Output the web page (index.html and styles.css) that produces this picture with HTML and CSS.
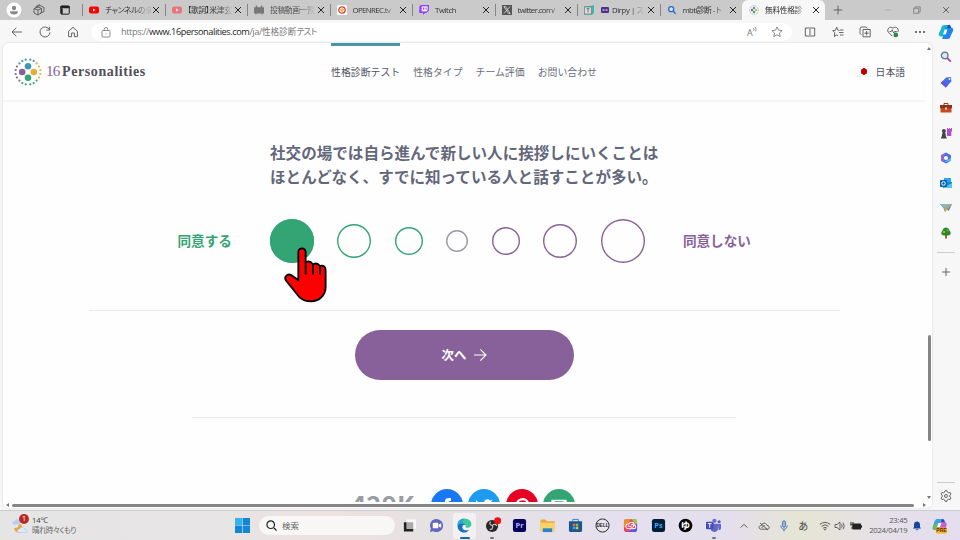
FILE: index.html
```
<!DOCTYPE html>
<html lang="ja">
    <head>
        <meta charset="utf-8">
        <title>無料性格診断テスト | 16Personalities</title>
        <link rel="stylesheet" href="styles.css">
    </head>
    <body>
        <!-- tabs -->
        <div class="tabs">
            <div class="tab-tools">
                <svg width="16" height="16" viewBox="0 0 16 16"><circle cx="8" cy="8" r="7.5" fill="#fff"/><circle cx="8" cy="6" r="2.2" fill="#888"/><path d="M4 9.2h8c0 2.2-1.6 3.3-4 3.3s-4-1.100-4-3.300z" fill="#888"/></svg>
                <svg width="12" height="12" viewBox="0 0 12 12" class="line"><path d="M3 3.500 7 1.500l4 2v4l-4 2M3 3.500v-1l4-2M1 4.500l4-1.500 3.500 1.500v4L5 11 1 9zM1 4.500 5 6l3.500-1.500M5 6v5"/></svg>
                <svg width="10" height="10" viewBox="0 0 10 10"><rect x=".7" y=".9" width="8.600" height="8.300" rx="1.300" fill="none" stroke="#222" stroke-width="1"/><path d="M.5 1h9v2.300h-9zM1 3v6h1.700V3z" fill="#222"/></svg>
            </div>
            <div class="tab">
                <svg class="fav" viewBox="0 0 10 10"><rect y="1.500" width="10" height="7" rx="2" fill="#f00"/><path d="M4 3.500v3L6.600 5z" fill="#fff"/></svg>
                <span class="tab-title">チャンネルのダ</span><span class="close"></span>
            </div>
            <div class="tab">
                <svg class="fav" viewBox="0 0 10 10"><rect y="1.500" width="10" height="7" rx="2" fill="#e8757c"/><path d="M4 3.500v3L6.600 5z" fill="#fff"/></svg>
                <span class="tab-title">【歌詞】米津玄</span><span class="close"></span>
            </div>
            <div class="tab">
                <svg class="fav" viewBox="0 0 10 10"><path d="M0 2.200h2L1.500.6l1-.4 1.200 2h2.600l1.200-2 1 .4L8 2.200h2v6.300H8.500v1h-1v-1h-5v1h-1v-1H0z" fill="#777"/></svg>
                <span class="tab-title dim">投稿動画一覧</span><span class="close"></span>
            </div>
            <div class="tab">
                <svg class="fav" viewBox="0 0 10 10"><rect width="10" height="10" rx="1.500" fill="#fff"/><circle cx="5" cy="5" r="3.200" fill="none" stroke="#d9432f" stroke-width="1.300"/><circle cx="5" cy="5" r="1.200" fill="none" stroke="#f08a24"/></svg>
                <span class="tab-title latin">OPENREC.tv</span><span class="close"></span>
            </div>
            <div class="tab">
                <svg class="fav" viewBox="0 0 10 10"><path d="M1.700 0H10v5.500L7.500 8H6L4 10V8H.3V1.800z" fill="#8b3ff5"/><path d="M2.600 1.200h6.200v3.900L7.500 6.400H2.600z" fill="#eee4ff"/><path d="M4.600 2.500v2M7 2.500v2" stroke="#8b3ff5"/></svg>
                <span class="tab-title">Twitch</span><span class="close"></span>
            </div>
            <div class="tab">
                <svg class="fav" viewBox="0 0 10 10"><rect width="10" height="10" fill="#555"/><path d="M1.800 1.500h1.600l4.800 7H6.600zM8 1.500l-6 7" fill="none" stroke="#ddd" stroke-width=".8"/></svg>
                <span class="tab-title latin">twitter.com/</span><span class="close"></span>
            </div>
            <div class="tab">
                <svg class="fav" viewBox="0 0 10 10"><path d="M0 1.500 8 .8 10 0v8l-2 1.800H0z" fill="#35b9b0"/><path d="M.4 2h7v7h-7z" fill="#ddd" stroke="#777" stroke-width=".7"/><path d="M2.500 3.700h3M4 3.700v3.800" stroke="#777"/></svg>
                <svg class="fav small" viewBox="0 0 8 8"><rect y="1" width="8" height="6" rx="1" fill="#50308a"/><path d="M1.500 4h2M4.500 4h2" stroke="#fff"/></svg>
                <span class="tab-title short">Dirpy | ス</span><span class="close"></span>
            </div>
            <div class="tab">
                <svg class="fav" viewBox="0 0 10 10"><circle cx="4.200" cy="4.200" r="2.500" fill="#d8e8ff" stroke="#2467d1" stroke-width="1.300"/><path d="m6 6 2.700 2.700" stroke="#2467d1" stroke-width="1.400"/></svg>
                <span class="tab-title latin">mbti診断 - ト</span><span class="close"></span>
            </div>
            <div class="tab active">
                <svg class="fav" viewBox="0 0 10 10"><circle cx="5" cy="5" r="4.300" fill="none" stroke="#8eb5a0" stroke-dasharray="1 .9"/><circle cx="5" cy="3" r="1.200" fill="#4298b4"/><circle cx="3" cy="5" r="1.200" fill="#88619a"/><circle cx="7" cy="5" r="1.200" fill="#e4ae3a"/><circle cx="5" cy="7" r="1.200" fill="#33a474"/></svg>
                <span class="tab-title">無料性格診</span><span class="close"></span>
            </div>
            <svg class="new-tab line" width="10" height="10" viewBox="0 0 10 10"><path d="M5 .7v8.600M.7 5h8.600"/></svg>
            <div class="window-buttons">
                <svg class="line faded" width="8" height="8" viewBox="0 0 8 8"><path d="M1 4h6"/></svg>
                <svg class="line soft" width="8" height="8" viewBox="0 0 8 8"><path d="M.7 2.300h5v5h-5zM2 2.300V.9h5.200V6H5.700"/></svg>
                <svg class="line" width="8" height="8" viewBox="0 0 8 8"><path d="m1.200 1.200 5.600 5.600M6.800 1.200 1.200 6.800"/></svg>
            </div>
        </div>

        <!-- address bar -->
        <div class="toolbar">
            <div class="nav-buttons">
                <svg class="line" width="12" height="12" viewBox="0 0 12 12"><path d="M11 6H1.200M5.300 1.700 1 6l4.300 4.300"/></svg>
                <svg class="line" width="12" height="12" viewBox="0 0 12 12"><path d="M10.500 3.800A5 5 0 1 0 11 6.300M10.600.8v3.300H7.300"/></svg>
                <svg class="line" width="12" height="12" viewBox="0 0 12 12"><path d="m1.600 5.300 4.400-4 4.400 4v5.400h-3V7H4.600v3.700h-3z"/></svg>
            </div>
            <div class="address">
                <svg class="line soft" width="10" height="11" viewBox="0 0 10 11"><rect x="1" y="3.500" width="8" height="6.500" rx="1"/><path d="M3.200 3.500V2.300a1.800 1.800 0 0 1 3.600 0v1.200M5 6.300v1"/></svg>
                <span class="url">https://<b>www.16personalities.com</b>/ja/<span class="url-ja">性格診断<i>テスト</i></span></span>
                <svg class="read" width="12" height="12" viewBox="0 0 12 12"><text x="1" y="10" class="letter">A</text><path d="M7.200 2q1.200 1.200.3 2.700M9 .8q2 2.200.5 4.700" fill="none" stroke="#777" stroke-width=".8"/></svg>
                <svg class="line soft" width="12" height="12" viewBox="0 0 12 12"><path d="m6 .9 1.500 3.300 3.600.4-2.700 2.400.8 3.600L6 8.800l-3.200 1.800.8-3.600L.9 4.600l3.600-.4z"/></svg>
            </div>
            <div class="tools">
                <svg class="line" width="12" height="12" viewBox="0 0 12 12"><path d="M5 2H1.300v8H5M7 2h3.700v8H7M6 1v10"/></svg>
                <svg class="line" width="12" height="12" viewBox="0 0 12 12"><path d="M7.500 4.500 6 4.200 4.700 1.200 3.500 4.200.8 4.600l2 2.200-.5 3.700 2.500-1.600 1.400.8M8 4h3.500M7 6.500h4.500M8 9h3.500"/></svg>
                <svg class="line" width="12" height="12" viewBox="0 0 12 12"><path d="M2.500 8.500C.8 8 .8 7 1 5.500V3Q1 1 3 1h3q2 0 2.500 1.500M4 3.500h7.200v7.300H4zM7.600 5v4.300M5.400 7.200h4.400"/></svg>
                <svg class="line" width="12" height="12" viewBox="0 0 12 12"><path d="M5.500 10.300 1.300 6.100C-.7 3.500 3-.8 6 2.300c3-3.100 6.700 1 4.700 3.800M2.500 5.500h1.700l1-1.700L6.700 7l1-1.500h2"/><circle cx="8.800" cy="8.900" r="2.300" fill="#26893f" stroke="none"/></svg>
                <svg width="12" height="12" viewBox="0 0 12 12"><g fill="#333"><circle cx="2" cy="6" r=".9"/><circle cx="6" cy="6" r=".9"/><circle cx="10" cy="6" r=".9"/></g></svg>
            </div>
            <svg class="copilot" viewBox="0 0 16 16"><path d="M3 5c.8-3.300 1.500-4 3.800-4h5L8.600 12.500H3C.5 12 .5 10.500 1 9z" fill="#16b9cc"/><path d="M13 11c-.8 3.300-1.500 4-3.800 4h-5l3.200-11.500H13c2.500.5 2.500 2 2 3.500z" fill="#2385e8"/><path d="m10 1 2-.2L13.300 4H9z" fill="#1752b0"/><path d="m6.700 5.500h2.700l-1.700 5H5z" fill="#fff"/></svg>
        </div>

        <div class="main">
            <div class="page">
                <div class="content">
                    <header class="site-header">
                        <div class="logo">
                            <svg width="28" height="28" viewBox="0 0 28 28">
                                <circle cx="14" cy="8.200" r="3.300" fill="#4298b4"/><circle cx="8.200" cy="14" r="3.300" fill="#88619a"/><circle cx="19.800" cy="14" r="3.300" fill="#e4ae3a"/><circle cx="14" cy="19.800" r="3.300" fill="#33a474"/>
                                <g fill="#4298b4"><circle cx="5.400" cy="5.400" r="1.100"/><circle cx="8.300" cy="2.900" r="1.100"/><circle cx="11.700" cy="1.700" r="1.100"/><circle cx="16.300" cy="1.700" r="1.100"/><circle cx="19.700" cy="2.900" r="1.100"/></g>
                                <g fill="#e4ae3a"><circle cx="22.600" cy="5.400" r="1.100"/><circle cx="25" cy="8.500" r="1.100"/><circle cx="26.300" cy="12" r="1.100"/><circle cx="26.300" cy="16" r="1.100"/><circle cx="25" cy="19.500" r="1.100"/></g>
                                <g fill="#33a474"><circle cx="22.600" cy="22.600" r="1.100"/><circle cx="19.700" cy="25.100" r="1.100"/><circle cx="16.300" cy="26.300" r="1.100"/><circle cx="11.700" cy="26.300" r="1.100"/><circle cx="8.300" cy="25.100" r="1.100"/></g>
                                <g fill="#88619a"><circle cx="5.400" cy="22.600" r="1.100"/><circle cx="3" cy="19.500" r="1.100"/><circle cx="1.700" cy="16" r="1.100"/><circle cx="1.700" cy="12" r="1.100"/><circle cx="3" cy="8.500" r="1.100"/></g>
                            </svg>
                            <span class="sixteen">16</span><span class="brand">Personalities</span>
                        </div>
                        <nav class="menu">
                            <a class="current">性格診断テスト</a>
                            <a>性格タイプ</a>
                            <a>チーム評価</a>
                            <a>お問い合わせ</a>
                        </nav>
                        <div class="language"><span class="flag"></span>日本語</div>
                    </header>

                    <section class="question">
                        <p class="statement">社交の場では自ら進んで新しい人に挨拶しにいくことは<br>ほとんどなく、すでに知っている人と話すことが多い。</p>
                        <div class="scale">
                            <span class="caption agree">同意する</span>
                            <div class="options">
                                <span class="option agree max selected"></span>
                                <span class="option agree med"></span>
                                <span class="option agree min"></span>
                                <span class="option neutral"></span>
                                <span class="option disagree min"></span>
                                <span class="option disagree med"></span>
                                <span class="option disagree max"></span>
                            </div>
                            <span class="caption disagree">同意しない</span>
                        </div>
                    </section>

                    <button class="next">次へ
                        <svg width="14" height="14" viewBox="0 0 14 14"><path d="M1 7h12M7.300 1.300 13 7l-5.700 5.700" fill="none" stroke="#fff" stroke-width="1.100"/></svg>
                    </button>

                    <div class="share">
                        <span class="count">429K</span>
                        <svg width="32" height="32" viewBox="0 0 32 32"><circle cx="16" cy="16" r="16" fill="#1877f2"/><path d="M14 26v-9h-3v-3.500h3v-1.200C14 9.500 16 8.600 20 9v3c-2 0-2.500 0-2.500 1.500H20l-.5 3.500h-2v9z" fill="#fff"/></svg>
                        <svg width="32" height="32" viewBox="0 0 32 32"><circle cx="16" cy="16" r="16" fill="#1d9bf0"/><path d="M8 11q3.500 4 8 4c-.5-5 4-6 6-3.500l2.500-.8-1.500 2.500C23 22 14 26 7 22q3 0 4.500-1.500Q8 19 8 11z" fill="#fff"/></svg>
                        <svg width="32" height="32" viewBox="0 0 32 32"><circle cx="16" cy="16" r="16" fill="#e60023"/><path d="M12 18c-5-7 9-12 10-3 0 6-5 7-6 4M16 13l-3 12" fill="none" stroke="#fff" stroke-width="2.200"/></svg>
                        <svg width="32" height="32" viewBox="0 0 32 32"><circle cx="16" cy="16" r="16" fill="#33a474"/><path d="M9 11.500h14v10H9zl7 5 7-5" fill="none" stroke="#fff" stroke-width="1.300"/></svg>
                    </div>

                    <svg class="hand" viewBox="0 0 130 166"><path d="M43 100V15a11 11 0 0 1 22 0v31q12-8 22 6 12-7 21 5 17-4 17 13v50c0 29-24 43-43 43-20 0-30-6-38-15L7 102C-3 88 13 76 27 88zM65 46v34M87 52v28M108 57v23" fill="#fb0200" stroke="#000" stroke-width="5.500" stroke-linecap="round" stroke-linejoin="round"/></svg>
                </div>
                <div class="scroll-y"><i class="up"></i><span></span><i class="down"></i></div>
                <div class="scroll-x"><i class="left"></i><span></span><i class="right"></i></div>
            </div>

            <aside class="sidebar">
                <svg viewBox="0 0 12 12"><circle cx="4.700" cy="4.500" r="3.300" fill="#d9e8f5" stroke="#69737d" stroke-width="1.300"/><path d="m7.300 7.200 3.500 3.500" stroke="#a43ed0" stroke-width="1.800"/></svg>
                <svg viewBox="0 0 12 12"><path d="M6.200 1.500 11 1l.3 4.500-5.500 6L.7 7z" fill="#426fe8"/><path d="m.7 7 5.100 4.500 2-2.300L3 4.700z" fill="#6a4fe0"/><circle cx="9.500" cy="3" r=".9" fill="#fff"/></svg>
                <svg viewBox="0 0 12 12"><path d="M4 3.500v-2h4v2" fill="none" stroke="#a53a13"/><path d="M.5 3.300h11v7.200h-11z" fill="#c84b20"/><path d="M0 3h12v3.200H0z" fill="#8c3217"/><path d="M5 5.500h2v2H5z" fill="#ddd"/></svg>
                <svg viewBox="0 0 12 12"><path d="M7 1h1v1h1V1h1v1h1V1h1v3l-.7 1v4H7V5z" fill="#b34bd9"/><circle cx="3.900" cy="4" r="2" fill="#444"/><path d="M2.500 5.500h2.800L6 9.500l1 2H.7l1-2z" fill="#444"/></svg>
                <svg viewBox="0 0 12 12"><path d="M6 .5 11 3.300v5.400L6 11.500 1 8.700V3.300z" fill="#4c6ee8"/><path d="M6 .5 1 3.300v5.400l3 1.500V4z" fill="#9268ca"/><path d="m4 10.200 7-1.500V6L6 9z" fill="#5dc2ef"/><circle cx="6" cy="6" r="2.100" fill="#f7f7f7"/></svg>
                <svg viewBox="0 0 12 12"><path d="M4 1h7v5L4 9z" fill="#28a8ea"/><path d="M3 5h9v6H3z" fill="#1a84d0"/><path d="m3 11 9-5v5z" fill="#50c9f0"/><rect y="3" width="7" height="7" rx=".7" fill="#0864b1"/><circle cx="3.500" cy="6.500" r="1.800" fill="none" stroke="#fff"/></svg>
                <svg viewBox="0 0 12 12"><path d="M0 2h12L8.700 9 6 6.500 5 10 3.500 6z" fill="#3893bd"/><path d="M0 2h12L4 6z" fill="#83bcca"/><path d="m4 6 8-4-7 8z" fill="#cda354"/></svg>
                <svg viewBox="0 0 12 12"><path d="M5 7h2v4.500H5z" fill="#a9662d"/><path d="M6 .5c3 .6 3 2.500 4 3.600 1.500 2.500.5 4.400-2 4.400H4c-2.500 0-3.500-2-2-4.400C3 3 3 1 6 .5z" fill="#2d8a28"/><circle cx="4" cy="5" r="1" fill="#e0bd3c"/><circle cx="7.500" cy="3.500" r="1" fill="#65b83c"/></svg>
                <hr>
                <svg class="line add" viewBox="0 0 12 12"><path d="M6 2v8M2 6h8"/></svg>
                <hr class="bottom">
                <svg class="line settings" viewBox="0 0 12 12"><path d="m4.800 1 .4-.4h1.600l.5 1.500 1.300.8 1.600-.4.8 1.400L9.900 5v2l1.100 1.100-.8 1.400-1.600-.4-1.300.8-.5 1.500H5.200l-.5-1.500-1.300-.8-1.600.4L1 8.100 2.100 7V5L1 3.900l.8-1.400 1.600.4 1.300-.8z"/><circle cx="6" cy="6" r="1.500"/></svg>
            </aside>
        </div>

        <!-- windows taskbar -->
        <footer class="taskbar">
            <div class="weather">
                <svg width="17" height="17" viewBox="0 0 17 17"><path d="M2 7.500C-.5 7.500 0 4 2.500 4.300 4 1 8 2 8 5v2.500z" fill="#b4cff0"/><path d="M2 11c3 .5 5-1.500 5-4 4 0 5 7 0 8.500-2 .5-4-.5-5-4.500z" fill="#f3a13b"/><path d="M7 15.500c-2.500 0-2-3.500.3-3.300 1.500-3 5.500-2 5.700.6 3-.3 3 2.700 1 2.700z" fill="#dcebfc" stroke="#9cbfe5" stroke-width=".5"/></svg>
                <span class="badge">1</span>
                <div class="forecast">14℃<br><span>晴れ時々くもり</span></div>
            </div>
            <svg class="start" viewBox="0 0 14 14"><g fill="#1287d8"><path d="M0 0h6.700v6.700H0zM7.300 0H14v6.700H7.300zM0 7.300h6.700V14H0zM7.300 7.300H14V14H7.300z"/></g><path d="M0 0h6.700v6.700H0z" fill="#35b4ec"/></svg>
            <div class="search">
                <svg width="11" height="11" viewBox="0 0 11 11"><path d="m7.500 7.500 3 3M8.500 4.700a3.800 3.800 0 1 1-7.600 0 3.800 3.800 0 0 1 7.600 0z" fill="none" stroke="#222" stroke-width="1.200"/></svg>
                検索
            </div>
            <div class="apps">
                <span class="app"><svg viewBox="0 0 16 16"><path d="M5 1.500h10v10H5z" fill="#fff" opacity=".75"/><path d="M2 4.500h3v7h7v3H2z" fill="#222"/><path d="M5 4.500h7v7H5z" fill="#aaa"/></svg></span>
                <span class="app"><svg viewBox="0 0 16 16"><path d="M8 1a7 7 0 1 1-3.500 13L1 15l1-3.500A7 7 0 0 1 8 1z" fill="#6268bd"/><rect x="4" y="5" width="6" height="6" rx="1" fill="#fff"/><path d="m10.500 7 2.500-1.500v5L10.500 9z" fill="#fff"/></svg></span>
                <span class="app open"><svg viewBox="0 0 16 16"><path d="M.6 8.500C.3 3.500 3.500.5 8 .5c5 0 7.700 3.500 7.400 6.500-.2 2.800-3.200 4.200-5.900 3-.8-.4-.3-.8 0-1.500C10 6.500 8 5.500 6.500 5.500 3.500 5.400 1 6.500.6 8.500z" fill="#3cc9a0"/><path d="M.6 8.500C.3 3.500 3.500.5 8 .5c-2 1.500-1.500 3-1.500 5-3-.1-5.500 1-5.900 3z" fill="#2aa9d6"/><path d="M.6 8.500C1 6.500 3.500 5.400 6.500 5.500 9 5.500 9.500 7 9 8c-1-1.500-3.500-.5-3.300 2 .3 3 4.300 4 7.300 2.500C9 18 .8 15.500.6 8.500z" fill="#1473c4"/></svg></span>
                <span class="app running"><svg viewBox="0 0 16 16"><circle cx="7.500" cy="8.500" r="6.500" fill="#292929"/><path d="M8 8C5 8 4.500 5.500 6 4m2 4c2-2.500 4-1 4.500.5M8 8c1 3-1 4.500-3 4" fill="none" stroke="#c8c8c8" stroke-width="1.300"/><circle cx="13.500" cy="3" r="3.700" fill="#f0110e"/></svg></span>
                <span class="app"><svg viewBox="0 0 16 16"><rect x="1" y="1" width="14" height="14" rx="2.500" fill="#07005b"/><text x="8" y="11" text-anchor="middle" class="adobe" fill="#b6adff">Pr</text></svg></span>
                <span class="app"><svg viewBox="0 0 16 16"><path d="M.5 2.500q0-1 1-1h4l2 2H15q1 0 1 1V14H.5z" fill="#e8ac35"/><path d="M.5 5H16v9H.5z" fill="#f8d36d"/><path d="M3 11h10v4H3z" fill="#2d84c5"/></svg></span>
                <span class="app"><svg viewBox="0 0 16 16"><path d="M5 4V1.500h6V4" fill="none" stroke="#2689d3"/><path d="M1 3.500h14V13q0 2-2 2H3q-2 0-2-2z" fill="#1b568e"/><path d="M5 6h2.700v2.700H5z" fill="#ed6748"/><path d="M8.300 6H11v2.700H8.300z" fill="#8dbb38"/><path d="M5 9.300h2.700V12H5z" fill="#36a9e8"/><path d="M8.300 9.300H11V12H8.300z" fill="#f0bd2d"/></svg></span>
                <span class="app"><svg viewBox="0 0 16 16"><circle cx="8" cy="8" r="7" fill="#e7e4ea" stroke="#222" stroke-width="1"/><text x="8" y="10" text-anchor="middle" class="dell">DELL</text></svg></span>
                <span class="app"><svg viewBox="0 0 16 16"><rect x="1" y="1" width="14" height="14" rx="3" fill="#ec4062"/><path d="M1 4q0-3 3-3h5L1 10z" fill="#ef8f2b"/><path d="M9 1h3q3 0 3 3v4z" fill="#8cd34b"/><path d="M15 6v6q0 3-3 3H6z" fill="#5957dc"/><path d="M5.500 11.500c-4-.5-3-5.500.5-5 1.500-3 6-2.500 6 1 2.500 1 2 4-.5 4zM5 9c2-2 3 2 5.500.5 2-1.500 0-3.500-2-2" fill="#ed4664" stroke="#fff" stroke-width="1.100"/></svg></span>
                <span class="app"><svg viewBox="0 0 16 16"><rect x="1" y="1" width="14" height="14" rx="2.500" fill="#001e36"/><text x="8" y="11" text-anchor="middle" class="adobe" fill="#35a9ff">Ps</text></svg></span>
                <span class="app"><svg viewBox="0 0 16 16"><circle cx="8" cy="8" r="7.300" fill="#050505"/><text x="8" y="11.300" text-anchor="middle" class="yu">ゆ</text></svg></span>
                <span class="app running"><svg viewBox="0 0 16 16"><circle cx="9" cy="3" r="2.300" fill="#6c70d4"/><circle cx="14" cy="4" r="1.700" fill="#535ab8"/><path d="M5 6h8v5c0 5-7 5-8 1zM13 6.500h3V11q0 2-2.500 2z" fill="#6267c8"/><rect y="4" width="8" height="8" rx="1" fill="#444db1"/><path d="M2 6h4M4 6v4.500" stroke="#fff"/></svg></span>
            </div>
            <div class="tray">
                <svg class="line" viewBox="0 0 12 12"><path d="m2.500 7.500 3.500-3 3.500 3"/></svg>
                <svg class="line" viewBox="0 0 12 12"><path d="M3.200 9.200C0 9 .5 5.500 3.200 5.700c.5-3 4.800-3.500 5.700-.3 3 0 3 3.800.4 3.800zM2 3l8 7M3.500 8l3-3"/></svg>
                <svg class="line mic" viewBox="0 0 12 12"><rect x="4.500" y=".8" width="3" height="6.500" rx="1.500" fill="#9fbbe0"/><path d="M2.800 5.500c0 5 6.400 5 6.400 0M6 9.200v2.200"/></svg>
                <span class="ime">あ</span>
                <svg class="line" viewBox="0 0 12 12"><path d="M.8 4.400q5.200-4 10.400 0M2.500 6.300q3.500-3 7 0M4 8.200q2-1.700 4 0"/><circle cx="6" cy="9.500" r=".6"/></svg>
                <svg class="line volume" viewBox="0 0 12 12"><path d="M1 4.500h2l3-2.500v8L3 7.500H1zM7.500 4.200q1.500 1.800 0 3.600M9 2.700q2.500 3.300 0 6.600"/></svg>
                <svg class="battery" viewBox="0 0 12 12"><path d="M2.500 3.500H11v6H2.500z" fill="#222"/><path d="M11 5.200h1v2.500h-1z" fill="#222"/><path d="M1 2v3M3 2v3M.4 5h3.200v2H2v2" stroke="#222" fill="none"/></svg>
            </div>
            <div class="clock">23:45<br>2024/04/19</div>
            <svg class="bell" viewBox="0 0 10 12"><path d="M1 8.500 2 7V4.500c0-4 6-4 6 0V7l1 1.500zM3.500 9.300h3q-1.500 2-3 0z" fill="#12479d"/></svg>
            <svg class="copilot-pre" viewBox="0 0 16 16"><path d="M2 5c1-3.500 2-4 4-4h5L8 12H3C.5 12 0 10 1 8z" fill="#35a5e9"/><path d="M1.500 7 6 5 4 12c-3 0-3.500-2-2.500-5z" fill="#73b84d"/><path d="M7 4h5c3 0 3 2 2.300 4L13 13H6z" fill="#c55ce0"/><path d="m10 1 2 .5L13 4H9z" fill="#264ea3"/><path d="M6.500 5h3L8 9H5z" fill="#fff"/><rect x="4" y="9.500" width="11" height="6" rx="1" fill="#f5b622"/><text x="9.500" y="14.300" text-anchor="middle" class="pre">PRE</text></svg>
        </footer>
    </body>
</html>
```

FILE: styles.css
```
* {
    box-sizing: border-box;
}

body {
    margin: 0;
    width: 960px;
    height: 540px;
    display: flex;
    flex-direction: column;
    overflow: hidden;
    background: #f7f7f7;
    color: #444;
    font-family: "Noto Sans", "Noto Sans CJK JP", sans-serif;
}

svg {
    display: block;
    flex-shrink: 0;
}

.line {
    fill: none;
    stroke: #555;
    stroke-width: 0.9;
}

.line.soft {
    stroke: #808080;
}

.line.faded {
    stroke: #aaa;
}

/* tabs */
.tabs {
    height: 20px;
    display: flex;
    align-items: center;
    background: #cacaca;
    flex-shrink: 0;
}

.tab-tools {
    width: 82px;
    display: flex;
    align-items: center;
    gap: 11px;
    padding-left: 6px;
}

.tab-tools svg:nth-child(3) {
    margin-left: 4px;
}

.tab {
    width: 82.5px;
    height: 20px;
    display: flex;
    align-items: center;
    padding: 0 5px 0 7px;
    position: relative;
}

.tab:before {
    content: "";
    position: absolute;
    left: 0;
    top: 4px;
    width: 1px;
    height: 12px;
    background: #858585;
}

.tab.active {
    background: #f7f7f7;
    border-radius: 6px 6px 0 0;
}

.tab.active:before {
    display: none;
}

.fav {
    width: 10px;
    height: 10px;
    margin-right: 6px;
}

.fav.small {
    width: 8px;
    height: 8px;
    margin-right: 3px;
    margin-left: 1px;
}

.tab-title {
    width: 46px;
    white-space: nowrap;
    font-family: "Open Sans", "Noto Sans CJK JP", sans-serif;
    font-size: 7.8px;
    line-height: 14px;
    letter-spacing: -0.4px;
    font-feature-settings: "palt";
    color: #333;
    -webkit-mask-image: linear-gradient(to right, #000 65%, rgba(0, 0, 0, 0.2) 92%);
    mask-image: linear-gradient(to right, #000 65%, rgba(0, 0, 0, 0.2) 92%);
}

.tab-title.latin {
    letter-spacing: -0.6px;
}

.tab-title.short {
    width: 31px;
}

.tab-title.dim {
    color: #555;
}

.close {
    width: 8px;
    height: 8px;
    margin-left: auto;
    background:
        linear-gradient(45deg, transparent 46%, #222 46%, #222 54%, transparent 54%),
        linear-gradient(-45deg, transparent 46%, #222 46%, #222 54%, transparent 54%);
    background-size: 6px 6px;
    background-position: center;
    background-repeat: no-repeat;
}

.new-tab {
    margin-left: 8px;
}

.window-buttons {
    margin-left: auto;
    display: flex;
    gap: 21px;
    padding-right: 10px;
}

/* toolbar */
.toolbar {
    height: 23px;
    display: flex;
    align-items: center;
    flex-shrink: 0;
    padding-top: 1px;
}

.nav-buttons {
    width: 91px;
    display: flex;
    gap: 16px;
    padding-left: 11px;
}

.address {
    width: 701px;
    height: 18px;
    border-radius: 9px;
    background: #fff;
    display: flex;
    align-items: center;
    padding: 0 9px 0 10px;
}

.url {
    margin-left: 10px;
    font-family: "Open Sans", "Noto Sans CJK JP", sans-serif;
    font-size: 9.2px;
    line-height: 16px;
    letter-spacing: -0.42px;
    white-space: nowrap;
    color: #777;
}

.url b {
    font-weight: normal;
    color: #222;
}

.url-ja {
    font-size: 8.6px;
    letter-spacing: 0;
}

.url-ja i {
    font-style: normal;
    letter-spacing: -2px;
}

.read {
    margin-left: auto;
    margin-right: 13px;
}

.letter {
    font: 9px "Open Sans", sans-serif;
    fill: #777;
}

.tools {
    display: flex;
    gap: 15.5px;
    margin-left: 12px;
}

.copilot {
    width: 16px;
    height: 16px;
    margin-left: auto;
    margin-right: 6px;
}

.main {
    flex: 1;
    min-height: 0;
    display: flex;
}

.page {
    width: 929px;
    height: 465px;
    margin-left: 3px;
    display: grid;
    grid-template-columns: 924px 5px;
    grid-template-rows: 459px 6px;
    background: #fefefe;
    border-radius: 5px;
    box-shadow: 0 0 2px #ccc;
}

.content {
    position: relative;
    overflow: hidden;
    font-family: "Noto Sans CJK JP", sans-serif;
}

.site-header {
    height: 58px;
    margin-right: 3px;
    display: flex;
    border-bottom: 1px solid #f3f3f3;
    box-shadow: 0 1px 2px #f5f5f5;
}

.logo {
    width: 328px;
    display: flex;
    align-items: center;
    padding-left: 11px;
    font-family: "Liberation Serif", serif;
}

.sixteen {
    margin-left: 4px;
    color: #88619a;
    font-size: 15px;
    letter-spacing: -0.7px;
}

.brand {
    margin-left: 2.5px;
    color: #505056;
    font-weight: bold;
    font-size: 14px;
    letter-spacing: 0.58px;
}

.menu {
    display: flex;
    gap: 13px;
}

.menu a {
    font-size: 9.9px;
    line-height: 53px;
    color: #6d6e7c;
    border-top: 3px solid transparent;
    white-space: nowrap;
}

.menu a.current {
    border-color: #4a94a9;
    color: #50515e;
}

.language {
    margin-left: auto;
    margin-right: 19px;
    display: flex;
    align-items: center;
    font-size: 9.8px;
    color: #50515e;
}

.flag {
    width: 14px;
    height: 11px;
    margin-right: 5px;
    border: 1px solid #f3f3f3;
    background: radial-gradient(circle, #c00000 3px, #fff 3.5px);
}

.question {
    width: 751px;
    height: 210px;
    margin-left: 86px;
    padding-top: 40.4px;
    border-bottom: 1px solid #e9e9eb;
}

.statement {
    margin: 0 0 0 181px;
    font-size: 15.57px;
    line-height: 23.5px;
    font-weight: bold;
    color: #63677a;
    white-space: nowrap;
}

.scale {
    height: 44px;
    margin-top: 30.2px;
    padding-left: 88.5px;
    display: flex;
    align-items: center;
    gap: 38px;
}

.caption {
    padding-bottom: 2px;
    font-size: 13.6px;
    font-weight: bold;
    white-space: nowrap;
}

.options {
    display: flex;
    align-items: center;
    gap: 23.5px;
}

.option {
    width: 22px;
    height: 22px;
    border-radius: 50%;
    box-shadow: inset 0 0 0 1.4px currentColor;
    color: #9b9ba5;
}

.option.min {
    width: 28px;
    height: 28px;
}

.option.med {
    width: 34px;
    height: 34px;
}

.option.max {
    width: 44px;
    height: 44px;
}

.caption.agree,
.option.agree {
    color: #33a474;
}

.caption.disagree,
.option.disagree {
    color: #88619a;
}

.option.selected {
    background: #33a474;
}

.next {
    width: 219px;
    height: 50px;
    margin: 18.6px 0 0 352px;
    padding: 0;
    display: flex;
    align-items: center;
    justify-content: center;
    gap: 7px;
    border: none;
    border-radius: 25px;
    background: #88619a;
    color: #fff;
    font-family: "Noto Sans CJK JP", sans-serif;
    font-size: 12.4px;
    font-weight: bold;
}

.share {
    width: 544px;
    margin: 37.4px 0 0 189px;
    padding: 71px 0 0 159px;
    display: flex;
    gap: 5.5px;
    border-top: 1px solid #e9e9eb;
}

.count {
    width: 74px;
    font-size: 26px;
    line-height: 30px;
    font-weight: bold;
    color: #9b9ba5;
}

.hand {
    position: absolute;
    left: 281px;
    top: 204px;
    width: 43.3px;
    height: 55.3px;
    overflow: visible;
}

/* scrollbars */
.scroll-y {
    display: flex;
    flex-direction: column;
    align-items: center;
    justify-content: space-between;
    padding: 4px 1px 3px 0;
}

.scroll-y span {
    width: 3px;
    height: 106px;
    margin-top: 283px;
    margin-bottom: 53px;
    border-radius: 2px;
    background: #858585;
}

.scroll-x {
    display: flex;
    align-items: center;
    justify-content: space-between;
    padding: 0 1px 0 3px;
}

.scroll-x span {
    flex: 1;
    height: 3px;
    margin: 0 9px 0 3px;
    border-radius: 2px;
    background: #858585;
}

.scroll-y i,
.scroll-x i {
    border: 2px solid transparent;
}

.scroll-y .up {
    border-top: 0;
    border-bottom: 3px solid #777;
}

.scroll-y .down {
    border-bottom: 0;
    border-top: 3px solid #777;
}

.scroll-x .left {
    border-left: 0;
    border-right: 3px solid #777;
}

.scroll-x .right {
    border-right: 0;
    border-left: 3px solid #777;
}

/* edge sidebar */
.sidebar {
    width: 28px;
    height: 466px;
    display: flex;
    flex-direction: column;
    align-items: center;
    gap: 13.1px;
    padding-top: 8.4px;
}

.sidebar svg {
    width: 12px;
    height: 12px;
}

.sidebar hr {
    width: 18px;
    margin: 0;
    border: 0;
    border-top: 1px solid #ccc;
}

.sidebar .bottom {
    margin-top: auto;
    margin-bottom: -6px;
}

.sidebar .settings {
    margin-bottom: 7px;
}

/* taskbar */
.taskbar {
    height: 30px;
    flex-shrink: 0;
    display: flex;
    align-items: center;
    border-top: 1px solid #ccc;
    background: linear-gradient(to right, #e6e5e5 0, #e7e5e5 220px, #eee1e1 330px, #e5e2e2 430px, #e5e0ef 620px, #e4dfec 730px, #e5e5d4 800px, #e5e1e8 880px, #e3dded 960px);
}

.weather {
    width: 235px;
    display: flex;
    align-items: center;
    padding-left: 12px;
    position: relative;
}

.badge {
    position: absolute;
    left: 19px;
    top: -1px;
    width: 10px;
    height: 10px;
    border-radius: 50%;
    background: #b82a20;
    color: #fff;
    font-size: 7px;
    line-height: 10px;
    text-align: center;
}

.forecast {
    margin-left: 3px;
    padding-bottom: 2px;
    font-size: 7.5px;
    line-height: 10px;
    font-feature-settings: "palt";
}

.forecast span {
    color: #666;
    letter-spacing: -0.6px;
}

.start {
    width: 15px;
    height: 15px;
}

.search {
    width: 136px;
    height: 19px;
    margin-left: 9px;
    padding: 0 0 1px 7px;
    display: flex;
    align-items: center;
    gap: 5px;
    border-radius: 10px;
    background: #f9f6f6;
    font-size: 8.5px;
    color: #666;
}

.apps {
    display: flex;
    margin-left: 0.5px;
}

.app {
    width: 27.65px;
    height: 26px;
    display: flex;
    align-items: center;
    justify-content: center;
    position: relative;
}

.app svg {
    width: 15px;
    height: 15px;
    overflow: visible;
}

.app.open {
    background: #f2f0f0;
    background-clip: content-box;
    padding: 0 2px;
    border-radius: 4px;
}

.app.open:after,
.app.running:after {
    content: "";
    position: absolute;
    bottom: 0;
    left: 12px;
    width: 4px;
    height: 2px;
    border-radius: 1px;
    background: #777;
}

.app.open:after {
    left: 9px;
    width: 10px;
    background: #1668b2;
}

.adobe {
    font: bold 8px "Open Sans", sans-serif;
}

.dell {
    font: bold 5px "Liberation Sans", sans-serif;
    fill: #222;
}

.yu {
    font: bold 10px "Noto Sans CJK JP", sans-serif;
    fill: #fff;
}

.tray {
    display: flex;
    align-items: center;
    margin-left: 11px;
}

.tray svg {
    width: 12px;
    height: 12px;
    margin-right: 8px;
}

.tray .mic {
    stroke: #4671ad;
}

.ime {
    width: 12px;
    margin-right: 9px;
    font-family: "Noto Sans CJK JP", sans-serif;
    font-size: 10px;
    line-height: 12px;
}

.tray svg:nth-of-type(4) {
    margin-right: 3px;
}

.tray .volume {
    margin-right: 4px;
}

.tray .battery {
    margin-right: 0;
}

.clock {
    margin-left: auto;
    padding-bottom: 1px;
    text-align: right;
    font-family: "Open Sans", sans-serif;
    font-size: 7.7px;
    line-height: 10.5px;
    letter-spacing: -0.25px;
    color: #555;
}

.bell {
    width: 10px;
    height: 12px;
    margin-left: 4.5px;
}

.copilot-pre {
    width: 16px;
    height: 16px;
    margin: 0 12px 0 10px;
}

.pre {
    font: bold 5px "Liberation Sans", sans-serif;
    fill: #5c2a10;
}
```
